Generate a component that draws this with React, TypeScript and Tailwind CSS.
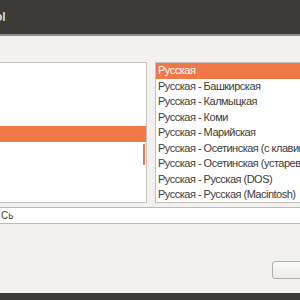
const layouts = [
  "Русская",
  "Русская - Башкирская",
  "Русская - Калмыцкая",
  "Русская - Коми",
  "Русская - Марийская",
  "Русская - Осетинская (с клавишей WinKeys)",
  "Русская - Осетинская (устаревшая)",
  "Русская - Русская (DOS)",
  "Русская - Русская (Macintosh)",
];

const font = { fontFamily: '"Liberation Sans", "DejaVu Sans", sans-serif' };

export default function App() {
  return (
    <div
      className="flex h-[300px] w-[300px] flex-col overflow-hidden bg-[#f2f1f0] text-[11px] tracking-[-0.5px] text-[#3c3c3c]"
      style={font}
    >
      {/* title bar */}
      <div className="flex h-[34px] shrink-0 items-center bg-[#3c3b37]">
        <span className="-ml-[5px] text-[12px] font-bold tracking-normal text-[#dfdbd2]">ol</span>
      </div>
      <div className="h-[2px] shrink-0 bg-[#8c8a84]" />

      <div className="flex flex-1 flex-col pt-[26px]">
        <div className="flex gap-[8px]">
          {/* left list */}
          <div className="relative -ml-[2px] h-[141px] w-[149px] shrink-0 border border-[#c5c2bc] bg-white pt-[1px]">
            {Array.from({ length: 9 }).map((_, i) => (
              <div key={i} className={`h-[15.5px] ${i === 4 ? "bg-[#f07746]" : ""}`} />
            ))}
            <div className="absolute top-[81px] right-[1px] h-[21px] w-[2px] bg-[#f07746]" />
          </div>

          {/* right list */}
          <div className="-mr-[20px] h-[141px] flex-1 overflow-hidden border border-[#c5c2bc] bg-white">
            {layouts.map((l, i) => (
              <div
                key={l}
                className={`flex h-[15.5px] items-center whitespace-nowrap px-[2px] pb-[1px] ${
                  i === 0 ? "bg-[#f07746] text-white" : ""
                }`}
              >
                {l}
              </div>
            ))}
          </div>
        </div>

        {/* entry */}
        <div className="-mx-[2px] mt-[4px] flex h-[17px] items-center border border-[#bdbab3] bg-white pl-[2px] text-[10px] tracking-normal">
          Сь
        </div>

        <div className="flex flex-1 items-start justify-end pt-[37px]">
          <div className="-mr-[10px] h-[18px] w-[38px] rounded-[3px] border border-[#b0ada6] bg-gradient-to-b from-[#fbfbfa] to-[#eceae6]" />
        </div>
      </div>

      <div className="h-[7px] shrink-0 bg-[#3c3b37]" />
    </div>
  );
}
